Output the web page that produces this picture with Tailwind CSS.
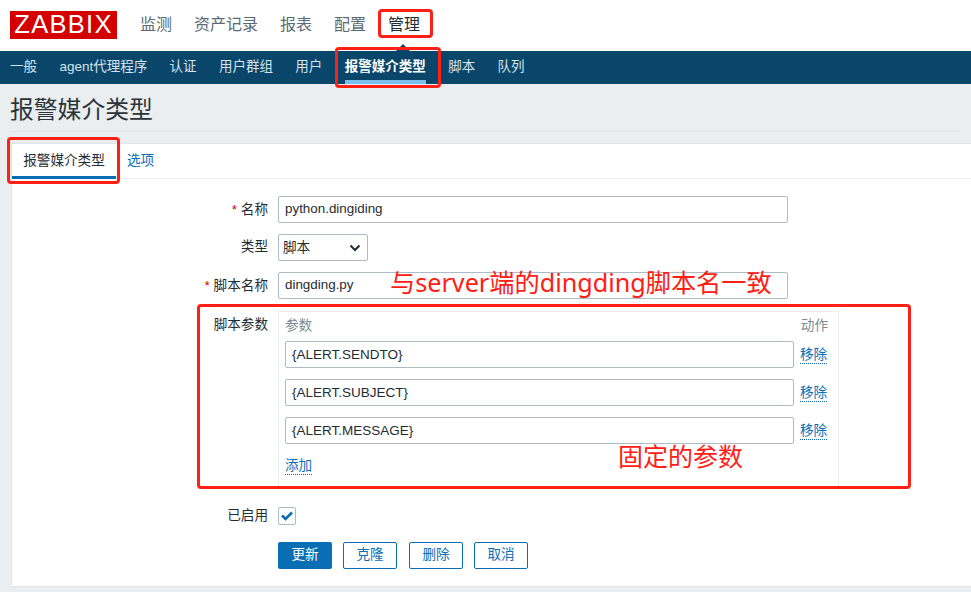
<!DOCTYPE html>
<html lang="zh-CN">
<head>
    <meta charset="UTF-8">
    <title>报警媒介类型</title>
    <script src="https://cdn.jsdelivr.net/npm/@tailwindcss/browser@4"></script>
</head>
<body class="relative h-[592px] w-[971px] overflow-hidden bg-[#ebeef0] text-[#1f2c33] font-['Liberation_Sans','Noto_Sans_CJK_SC',sans-serif]">
    <!-- Top nav -->
    <header class="relative flex h-[51px] items-center bg-white pl-[10px]">
        <div class="mb-[1px] flex h-[28px] w-[107px] items-center justify-center bg-[#d40000] text-[25.5px] leading-none tracking-[1.3px] text-white">ZABBIX</div>
        <nav class="ml-[23px] mb-[2px] flex gap-[22px] text-[16px] text-[#5b6b75]">
            <a>监测</a>
            <a>资产记录</a>
            <a>报表</a>
            <a>配置</a>
            <a class="text-[#1f2c33]">管理</a>
        </nav>
        <div class="absolute bottom-0 left-[396px] h-0 w-0 border-x-[7px] border-b-[7px] border-x-transparent border-b-[#0a466a]"></div>
    </header>

    <!-- Sub nav -->
    <nav class="flex h-[33px] items-center gap-[22.4px] bg-[#0a466a] pl-[10px] text-[13.5px] text-[#d5e3ec]">
        <a>一般</a>
        <a>agent代理程序</a>
        <a>认证</a>
        <a>用户群组</a>
        <a>用户</a>
        <a class="relative flex h-full items-center font-bold text-white">报警媒介类型<span class="absolute bottom-0 left-0 h-[4px] w-full bg-[#7cc0f0]"></span></a>
        <a>脚本</a>
        <a>队列</a>
    </nav>

    <!-- Title -->
    <div class="mx-[10px] flex h-[48px] items-center border-b border-[#dfe4e7] pt-[4px] text-[23.8px] text-[#2b3439]">报警媒介类型</div>

    <!-- Card -->
    <main class="ml-[11px] mt-[11px] h-[444px] border border-r-0 border-[#dfe4e7] bg-white text-[13.6px]">
        <div class="flex h-[35px] border-b border-[#ebeef0]">
            <div class="flex h-[35px] w-[104px] items-center justify-center border-b-[3px] border-[#0a6eb4] pt-[2px]">报警媒介类型</div>
            <a class="ml-[11px] flex items-center pt-[1px] text-[#0a6eb4]">选项</a>
        </div>

        <form class="mt-[17px] flex flex-col">
            <div class="flex h-[27px] items-center">
                <label class="w-[257px] pr-[1px] pt-[2px] text-right"><span class="text-[#d40000]">*</span> 名称</label>
                <div class="ml-[9px] flex h-[27px] w-[510px] items-center rounded-[2px] border border-[#acbbc4] px-[6px] text-[13.4px]">python.dingiding</div>
            </div>
            <div class="mt-[11px] flex h-[27px] items-center">
                <label class="w-[257px] pr-[1px] text-right">类型</label>
                <div class="ml-[9px] flex h-[27px] w-[90px] items-center justify-between rounded-[2px] border border-[#acbbc4] pl-[4px] pr-[6px]"><span class="pt-[1px]">脚本</span>
                    <svg width="12" height="8" viewBox="0 0 12 8"><path d="M1.5 1.5 6 6l4.5-4.5" fill="none" stroke="#1f2c33" stroke-width="2"/></svg>
                </div>
            </div>
            <div class="mt-[11px] flex h-[27px] items-center">
                <label class="w-[257px] pr-[1px] pt-[1px] text-right"><span class="text-[#d40000]">*</span> 脚本名称</label>
                <div class="ml-[9px] flex h-[27px] w-[510px] items-center rounded-[2px] border border-[#acbbc4] px-[6px] text-[13.4px]">dingding.py</div>
            </div>
            <div class="mt-[12px] flex">
                <label class="w-[257px] pr-[1px] pt-[4px] text-right">脚本参数</label>
                <div class="ml-[9px] h-[176px] w-[561px] border border-[#ebeef0] px-[6px]">
                    <div class="flex h-[29px] items-center justify-between pr-[4px] text-[#7c8b94]"><span>参数</span><span>动作</span></div>
                    <div class="flex flex-col gap-[11px]">
                        <div class="flex items-center gap-[6px]">
                            <div class="flex h-[27px] w-[509px] items-center rounded-[2px] border border-[#acbbc4] px-[6px] pt-[1px] text-[13.5px]">{ALERT.SENDTO}</div>
                            <a class="border-b border-dotted border-[#0a6eb4] leading-[17px] text-[#0a6eb4]">移除</a>
                        </div>
                        <div class="flex items-center gap-[6px]">
                            <div class="flex h-[27px] w-[509px] items-center rounded-[2px] border border-[#acbbc4] px-[6px] pt-[1px] text-[13.5px]">{ALERT.SUBJECT}</div>
                            <a class="border-b border-dotted border-[#0a6eb4] leading-[17px] text-[#0a6eb4]">移除</a>
                        </div>
                        <div class="flex items-center gap-[6px]">
                            <div class="flex h-[27px] w-[509px] items-center rounded-[2px] border border-[#acbbc4] px-[6px] pt-[1px] text-[13.5px]">{ALERT.MESSAGE}</div>
                            <a class="border-b border-dotted border-[#0a6eb4] leading-[17px] text-[#0a6eb4]">移除</a>
                        </div>
                    </div>
                    <a class="mt-[13px] inline-block border-b border-dotted border-[#0a6eb4] leading-[17px] text-[#0a6eb4]">添加</a>
                </div>
            </div>
            <div class="mt-[20px] flex h-[18px] items-center">
                <label class="w-[257px] pr-[1px] pt-[1px] text-right">已启用</label>
                <div class="ml-[9px] flex h-[18px] w-[18px] items-center justify-center rounded-[2px] border border-[#acbbc4]">
                    <svg width="12" height="10" viewBox="0 0 12 10"><path d="M1 4.5l3.5 3.5L11 1.5" fill="none" stroke="#0a6eb4" stroke-width="2.6"/></svg>
                </div>
            </div>
            <div class="ml-[266px] mt-[17px] flex h-[27px] gap-[11px]">
                <button type="button" class="w-[54px] rounded-[2px] bg-[#0a6eb4] text-white">更新</button>
                <button type="button" class="w-[54px] rounded-[2px] border border-[#0a6eb4] text-[#0a6eb4]">克隆</button>
                <button type="button" class="ml-[1px] w-[54px] rounded-[2px] border border-[#0a6eb4] text-[#0a6eb4]">删除</button>
                <button type="button" class="w-[54px] rounded-[2px] border border-[#0a6eb4] text-[#0a6eb4]">取消</button>
            </div>
        </form>
    </main>

    <!-- Red annotations drawn over the screenshot -->
    <div class="absolute left-[378px] top-[9px] h-[29px] w-[55px] rounded-[4px] border-[3.5px] border-[#ff2015]"></div>
    <div class="absolute left-[335px] top-[47px] h-[41px] w-[106px] rounded-[4px] border-[3.5px] border-[#ff2015]"></div>
    <div class="absolute left-[7px] top-[137px] h-[47px] w-[113px] rounded-[4px] border-[3.5px] border-[#ff2015]"></div>
    <div class="absolute left-[197px] top-[304px] h-[185px] w-[714px] rounded-[4px] border-[3.5px] border-[#ff2015]"></div>
    <div class="absolute left-[390px] top-[264px] font-['Noto_Sans','Noto_Sans_CJK_SC',sans-serif] text-[25.2px] leading-[36px] text-[#ff2015]">与server端的dingding脚本名一致</div>
    <div class="absolute left-[618px] top-[438px] font-['Noto_Sans','Noto_Sans_CJK_SC',sans-serif] text-[25px] leading-[36px] text-[#ff2015]">固定的参数</div>
</body>
</html>
